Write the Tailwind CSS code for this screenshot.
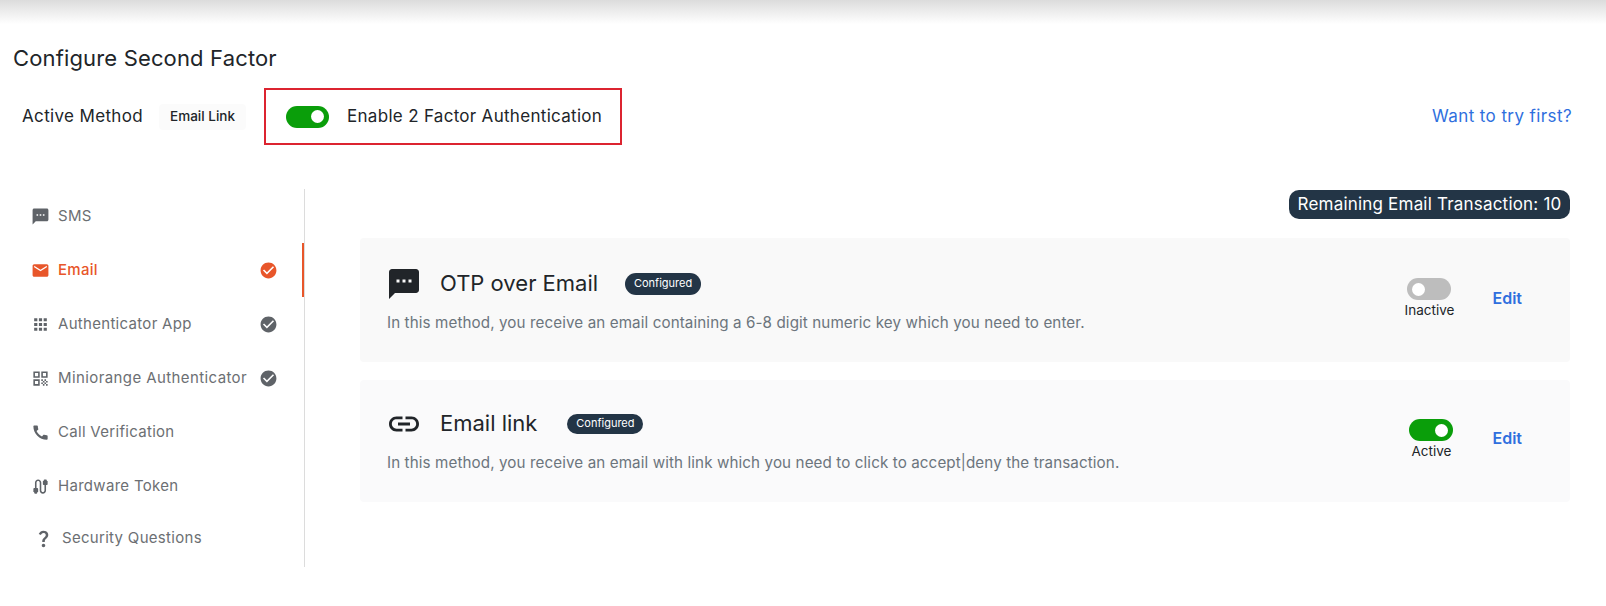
<!DOCTYPE html>
<html lang="en">
<head>
    <meta charset="UTF-8">
    <title>Configure Second Factor</title>
    <script src="https://cdn.jsdelivr.net/npm/@tailwindcss/browser@4"></script>
</head>
<body class="bg-white font-['Inter',sans-serif] text-[#212529]">
    <div class="h-[24px] bg-gradient-to-b from-[#dcdcdc] to-white"></div>

    <h1 class="mt-[20px] ml-[13px] h-[28px] text-[22px] leading-[28px] tracking-[0.15px] font-normal">Configure Second Factor</h1>

    <!-- active method row -->
    <div class="mt-[16px] flex h-[57px] items-center pr-[34px]">
        <span class="ml-[22px] w-[137px] text-[17px] tracking-[0.35px]">Active Method</span>
        <span class="flex h-[26px] w-[87px] items-center justify-center rounded bg-[#fbfbfb] text-[13.5px] font-medium">Email Link</span>
        <div class="ml-[18px] flex h-[57px] w-[358px] items-center border-[2px] border-[#dc2430] pl-[20px]">
            <span class="flex h-[22px] w-[43px] items-center justify-end rounded-full bg-[#0a9e0a] pr-[5px]"><span class="h-[13px] w-[13px] rounded-full bg-white"></span></span>
            <span class="ml-[18px] pt-[1px] text-[17px] tracking-[0.3px]">Enable 2 Factor Authentication</span>
        </div>
        <a class="ml-auto text-[17px] tracking-[0.4px] text-[#2f6fde]">Want to try first?</a>
    </div>

    <div class="mt-[44px] flex">
        <!-- sidebar -->
        <nav class="w-[305px] shrink-0 border-r border-[#dcdcdc] text-[15px] tracking-[0.3px] text-[#6c6f73]">
            <div class="flex h-[54px] items-center pl-[31px]">
                <svg class="h-[19px] w-[19px] fill-[#5f6368]" viewBox="0 0 24 24"><path d="M20 2H4c-1.1 0-1.99.9-1.99 2L2 22l4-4h14c1.1 0 2-.9 2-2V4c0-1.1-.9-2-2-2zM9 11H7V9h2v2zm4 0h-2V9h2v2zm4 0h-2V9h2v2z"/></svg>
                <span class="ml-[8px]">SMS</span>
            </div>
            <div class="flex h-[54px] items-center border-r-2 border-[#e8562a] pl-[31px] font-medium text-[#e8562a]">
                <svg class="h-[19px] w-[19px] fill-[#e8562a]" viewBox="0 0 24 24"><path d="M20 4H4c-1.1 0-1.99.9-1.99 2L2 18c0 1.1.9 2 2 2h16c1.1 0 2-.9 2-2V6c0-1.1-.9-2-2-2zm0 4l-8 5-8-5V6l8 5 8-5v2z"/></svg>
                <span class="ml-[8px]">Email</span>
                <svg class="ml-auto mr-[24px] h-[19px] w-[19px] fill-[#e8562a]" viewBox="0 0 24 24"><path d="M12 2C6.48 2 2 6.48 2 12s4.48 10 10 10 10-4.48 10-10S17.52 2 12 2zm-2 15l-5-5 1.41-1.41L10 14.17l7.59-7.59L19 8l-9 9z"/></svg>
            </div>
            <div class="flex h-[54px] items-center pl-[31px]">
                <svg class="h-[19px] w-[19px] fill-[#5f6368]" viewBox="0 0 24 24"><path d="M4 8h4V4H4v4zm6 12h4v-4h-4v4zm-6 0h4v-4H4v4zm0-6h4v-4H4v4zm6 0h4v-4h-4v4zm6-10v4h4V4h-4zm-6 4h4V4h-4v4zm6 6h4v-4h-4v4zm0 6h4v-4h-4v4z"/></svg>
                <span class="ml-[8px]">Authenticator App</span>
                <svg class="ml-auto mr-[26px] h-[19px] w-[19px] fill-[#5f6368]" viewBox="0 0 24 24"><path d="M12 2C6.48 2 2 6.48 2 12s4.48 10 10 10 10-4.48 10-10S17.52 2 12 2zm-2 15l-5-5 1.41-1.41L10 14.17l7.59-7.59L19 8l-9 9z"/></svg>
            </div>
            <div class="flex h-[54px] items-center pl-[31px]">
                <svg class="h-[19px] w-[19px] fill-[#5f6368]" viewBox="0 0 24 24"><path d="M3 11h8V3H3v8zm2-6h4v4H5V5zM3 21h8v-8H3v8zm2-6h4v4H5v-4zM13 3v8h8V3h-8zm6 6h-4V5h4v4zM19 19h2v2h-2zM13 13h2v2h-2zM15 15h2v2h-2zM13 17h2v2h-2zM15 19h2v2h-2zM17 17h2v2h-2zM17 13h2v2h-2zM19 15h2v2h-2z"/></svg>
                <span class="ml-[8px] tracking-[0.4px]">Miniorange Authenticator</span>
                <svg class="ml-auto mr-[26px] h-[19px] w-[19px] fill-[#5f6368]" viewBox="0 0 24 24"><path d="M12 2C6.48 2 2 6.48 2 12s4.48 10 10 10 10-4.48 10-10S17.52 2 12 2zm-2 15l-5-5 1.41-1.41L10 14.17l7.59-7.59L19 8l-9 9z"/></svg>
            </div>
            <div class="flex h-[54px] items-center pl-[31px]">
                <svg class="h-[19px] w-[19px] fill-[#5f6368]" viewBox="0 0 24 24"><path d="M20.01 15.38c-1.23 0-2.42-.2-3.53-.56-.35-.12-.74-.03-1.01.24l-1.57 1.97c-2.83-1.35-5.48-3.9-6.89-6.83l1.95-1.66c.27-.28.35-.67.24-1.02-.37-1.11-.56-2.3-.56-3.53 0-.54-.45-.99-.99-.99H4.19C3.65 3 3 3.24 3 3.99 3 13.28 10.73 21 20.01 21c.71 0 .99-.63.99-1.18v-3.45c0-.54-.45-.99-.99-.99z"/></svg>
                <span class="ml-[8px]">Call Verification</span>
            </div>
            <div class="flex h-[54px] items-center pl-[31px]">
                <svg class="h-[19px] w-[19px] fill-[#5f6368]" viewBox="0 0 24 24"><path d="M20 5V4c0-.55-.45-1-1-1h-2c-.55 0-1 .45-1 1v1h-1v4c0 .55.45 1 1 1h1v7c0 1.1-.9 2-2 2s-2-.9-2-2V7c0-2.21-1.79-4-4-4S5 4.79 5 7v7H4c-.55 0-1 .45-1 1v4h1v1c0 .55.45 1 1 1h2c.55 0 1-.45 1-1v-1h1v-4c0-.55-.45-1-1-1H7V7c0-1.1.9-2 2-2s2 .9 2 2v10c0 2.21 1.79 4 4 4s4-1.79 4-4v-7h1c.55 0 1-.45 1-1V5h-1z"/></svg>
                <span class="ml-[8px]">Hardware Token</span>
            </div>
            <div class="flex h-[54px] items-center pb-[4px] pl-[33px]">
                <svg class="h-[21px] w-[21px] fill-[#5f6368]" viewBox="0 0 24 24"><path d="M11.07 12.85c.77-1.39 2.25-2.21 3.11-3.44.91-1.29.4-3.7-2.18-3.7-1.69 0-2.52 1.28-2.87 2.34L6.54 6.96C7.25 4.83 9.18 3 11.99 3c2.35 0 3.96 1.07 4.78 2.41.7 1.15 1.11 3.3.03 4.9-1.2 1.77-2.35 2.31-2.97 3.45-.25.46-.35.76-.35 2.24h-2.89c-.01-.78-.13-2.05.48-3.15zM14 20c0 1.1-.9 2-2 2s-2-.9-2-2 .9-2 2-2 2 .9 2 2z"/></svg>
                <span class="ml-[8px]">Security Questions</span>
            </div>
        </nav>

        <!-- methods -->
        <main class="flex-1 pl-[55px] pr-[36px]">
            <div class="mt-[1px] flex justify-end">
                <span class="flex h-[29px] w-[281px] items-center justify-center rounded-[10px] bg-[#233546] text-[17px] tracking-[0.2px] text-white">Remaining Email Transaction: 10</span>
            </div>

            <section class="mt-[19px] flex h-[124px] items-start rounded bg-[#f9f9f9] pl-[27px] pr-[48px]">
                <div class="flex-1">
                    <div class="mt-[30px] flex h-[31px] items-center">
                        <svg class="h-[36px] w-[36px] -ml-[1px] fill-[#212529]" viewBox="0 0 24 24"><path d="M20 2H4c-1.1 0-1.99.9-1.99 2L2 22l4-4h14c1.1 0 2-.9 2-2V4c0-1.1-.9-2-2-2zM9 11H7V9h2v2zm4 0h-2V9h2v2zm4 0h-2V9h2v2z"/></svg>
                        <span class="ml-[18px] text-[22px]">OTP over Email</span>
                        <span class="ml-[27px] flex h-[22px] w-[76px] items-center justify-center rounded-full bg-[#233546] text-[11px] text-white">Configured</span>
                    </div>
                    <p class="mt-[13px] text-[15.2px] leading-[22px] tracking-[0.1px] text-[#6c757d]">In this method, you receive an email containing a 6-8 digit numeric key which you need to enter.</p>
                </div>
                <div class="mt-[40px] flex w-[60px] flex-col items-center">
                    <span class="flex h-[22px] w-[44px] items-center rounded-full bg-[#bdbdbd] pl-[5px]"><span class="h-[13px] w-[13px] rounded-full bg-white"></span></span>
                    <span class="mt-px text-[13.5px] leading-[18px]">Inactive</span>
                </div>
                <a class="ml-[33px] mt-[50px] text-[16px] font-semibold leading-[20px] text-[#2f6fde]">Edit</a>
            </section>

            <section class="mt-[18px] flex h-[122px] items-start rounded bg-[#fafafb] pl-[27px] pr-[48px]">
                <div class="flex-1">
                    <div class="mt-[28px] flex h-[31px] items-center">
                        <svg class="h-[36px] w-[36px] -ml-[1px] fill-[#212529]" viewBox="0 0 24 24"><path d="M3.9 12c0-1.71 1.39-3.1 3.1-3.1h4V7H7c-2.76 0-5 2.24-5 5s2.24 5 5 5h4v-1.9H7c-1.71 0-3.1-1.39-3.1-3.1zM8 13h8v-2H8v2zm9-6h-4v1.9h4c1.71 0 3.1 1.39 3.1 3.1s-1.39 3.1-3.1 3.1h-4V17h4c2.76 0 5-2.24 5-5s-2.24-5-5-5z"/></svg>
                        <span class="ml-[18px] text-[22px]">Email link</span>
                        <span class="ml-[30px] flex h-[20px] w-[76px] items-center justify-center rounded-full bg-[#233546] text-[11px] text-white">Configured</span>
                    </div>
                    <p class="mt-[13px] text-[15.2px] leading-[22px] tracking-[0.1px] text-[#6c757d]">In this method, you receive an email with link which you need to click to accept|deny the transaction.</p>
                </div>
                <div class="mt-[39px] flex w-[60px] flex-col items-center">
                    <span class="flex h-[22px] w-[44px] items-center justify-end rounded-full bg-[#0a9e0a] pr-[5px]"><span class="h-[13px] w-[13px] rounded-full bg-white"></span></span>
                    <span class="mt-px text-[13.5px] leading-[18px]">Active</span>
                </div>
                <a class="ml-[31px] mt-[48px] text-[16px] font-semibold leading-[20px] text-[#2f6fde]">Edit</a>
            </section>
        </main>
    </div>
</body>
</html>
